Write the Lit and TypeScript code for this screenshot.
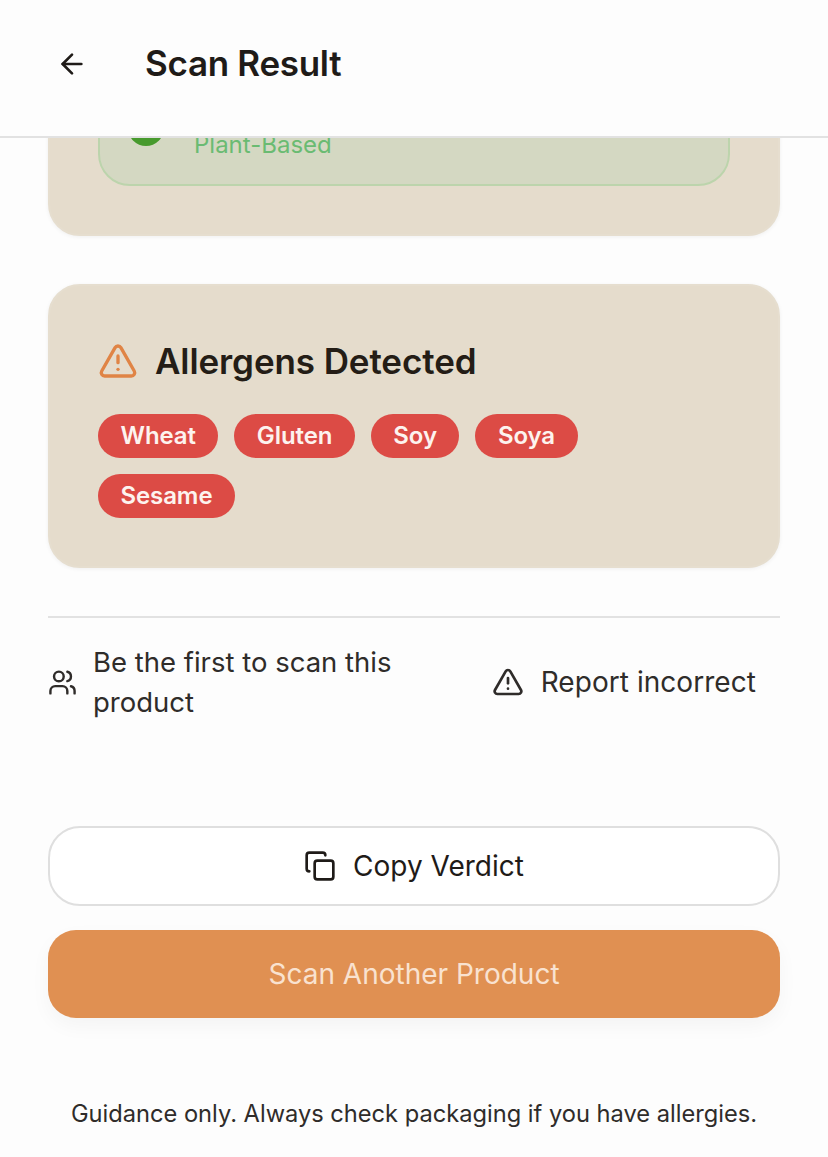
import { LitElement, html, css } from "lit";
import { customElement } from "lit/decorators.js";

const warn = html`<svg viewBox="0 0 24 24" fill="none" stroke="currentColor" stroke-width="2" stroke-linecap="round" stroke-linejoin="round"><path d="m21.73 18-8-14a2 2 0 0 0-3.48 0l-8 14A2 2 0 0 0 4 21h16a2 2 0 0 0 1.73-3"/><path d="M12 9v4"/><path d="M12 17h.01"/></svg>`;

@customElement("app-root")
export class AppRoot extends LitElement {
  static styles = css`
    :host { display: block; height: 1157px; overflow: hidden; background: #fdfdfd; color: #1f1b18; font-family: Inter, "Liberation Sans", sans-serif; }
    * { box-sizing: border-box; }
    header { height: 138px; border-bottom: 2px solid #e2e2e2; background: #fdfdfd; display: flex; align-items: center; padding: 0 0 10px 56px; gap: 57px; }
    .back { width: 32px; height: 32px; display: block; margin-top: 2px; }
    h1 { margin: 0; font-size: 35px; font-weight: 600; letter-spacing: -0.3px; line-height: 44px; }
    main { height: 1019px; overflow: hidden; padding: 0 48px; }
    .card { background: #e5dccc; border-radius: 32px; box-shadow: 0 1px 4px rgba(0,0,0,.06); border: 2px solid #e6decf; }
    .verdict { height: 300px; margin-top: -202px; padding: 48px 48px 48px; display: flex; flex-direction: column; justify-content: flex-end; }
    .safe { height: 200px; background: #d4d8c2; border: 2px solid #bcd4ac; border-radius: 32px; padding: 0 28px 38px; display: flex; align-items: flex-end; gap: 30px; }
    .dot { width: 36px; height: 36px; border-radius: 50%; background: #479a2d; flex: none; }
    .plant { font-size: 24px; line-height: 32px; color: #6abb72; margin-bottom: -15px; }
    .allergens { height: 284px; margin-top: 48px; padding: 54px 48px 0; }
    .head { display: flex; align-items: center; gap: 17px; }
    .head svg { width: 40px; height: 40px; color: #e08445; flex: none; }
    h2 { margin: 0; font-size: 35px; line-height: 42px; font-weight: 600; letter-spacing: -0.1px; color: #241d16; }
    .chips { display: flex; flex-wrap: wrap; gap: 16px; margin-top: 32px; }
    .chip { height: 44px; border-radius: 22px; background: #dc4b45; color: #fdf3ef; padding: 0 22.5px; font-size: 24px; font-weight: 600; letter-spacing: -0.1px; line-height: 44px; }
    .meta { margin-top: 48px; border-top: 2px solid #e2e2e2; padding-top: 24px; display: flex; align-items: center; justify-content: space-between; color: #2f2c2a; }
    .first { display: flex; align-items: center; gap: 16px; width: 360px; font-size: 27.5px; line-height: 40px; }
    .first svg { width: 29px; height: 29px; flex: none; }
    .report { display: flex; align-items: center; gap: 17px; padding-right: 24px; font-size: 28px; font-weight: 400; letter-spacing: 0.05px; line-height: 40px; }
    .report svg { width: 32px; height: 32px; flex: none; }
    .copy { margin-top: 104px; height: 80px; border: 2px solid #dfdfdf; border-radius: 32px; background: #fff; display: flex; align-items: center; justify-content: center; gap: 17px; font-size: 28px; font-weight: 400; }
    .copy svg { width: 32px; height: 32px; flex: none; }
    .scan { margin-top: 24px; height: 88px; border-radius: 28px; background: #e09052; color: #f9e2d0; display: flex; align-items: center; justify-content: center; font-size: 28px; font-weight: 400; box-shadow: 0 8px 20px rgba(0,0,0,.04); }
    .note { margin: 80px -48px 0; text-align: center; font-size: 23.65px; line-height: 32px; color: #2f2c2a; }
  `;

  render() {
    return html`
      <header>
        <svg class="back" viewBox="0 0 24 24" fill="none" stroke="currentColor" stroke-width="2" stroke-linecap="round" stroke-linejoin="round"><path d="m12 19-7-7 7-7"/><path d="M19 12H5"/></svg>
        <h1>Scan Result</h1>
      </header>
      <main>
        <section class="card verdict">
          <div class="safe"><span class="dot"></span><span class="plant">Plant-Based</span></div>
        </section>
        <section class="card allergens">
          <div class="head">${warn}<h2>Allergens Detected</h2></div>
          <div class="chips">
            ${["Wheat", "Gluten", "Soy", "Soya", "Sesame"].map((c) => html`<span class="chip">${c}</span>`)}
          </div>
        </section>
        <div class="meta">
          <div class="first">
            <svg viewBox="0 0 24 24" fill="none" stroke="currentColor" stroke-width="2" stroke-linecap="round" stroke-linejoin="round"><path d="M16 21v-2a4 4 0 0 0-4-4H6a4 4 0 0 0-4 4v2"/><path d="M16 3.128a4 4 0 0 1 0 7.744"/><path d="M22 21v-2a4 4 0 0 0-3-3.87"/><circle cx="9" cy="7" r="4"/></svg>
            <span>Be the first to scan this product</span>
          </div>
          <div class="report">${warn}<span>Report incorrect</span></div>
        </div>
        <div class="copy">
          <svg viewBox="0 0 24 24" fill="none" stroke="currentColor" stroke-width="2" stroke-linecap="round" stroke-linejoin="round"><rect width="14" height="14" x="8" y="8" rx="2" ry="2"/><path d="M4 16c-1.1 0-2-.9-2-2V4c0-1.1.9-2 2-2h10c1.1 0 2 .9 2 2"/></svg>
          <span>Copy Verdict</span>
        </div>
        <div class="scan">Scan Another Product</div>
        <div class="note">Guidance only. Always check packaging if you have allergies.</div>
      </main>
    `;
  }
}
